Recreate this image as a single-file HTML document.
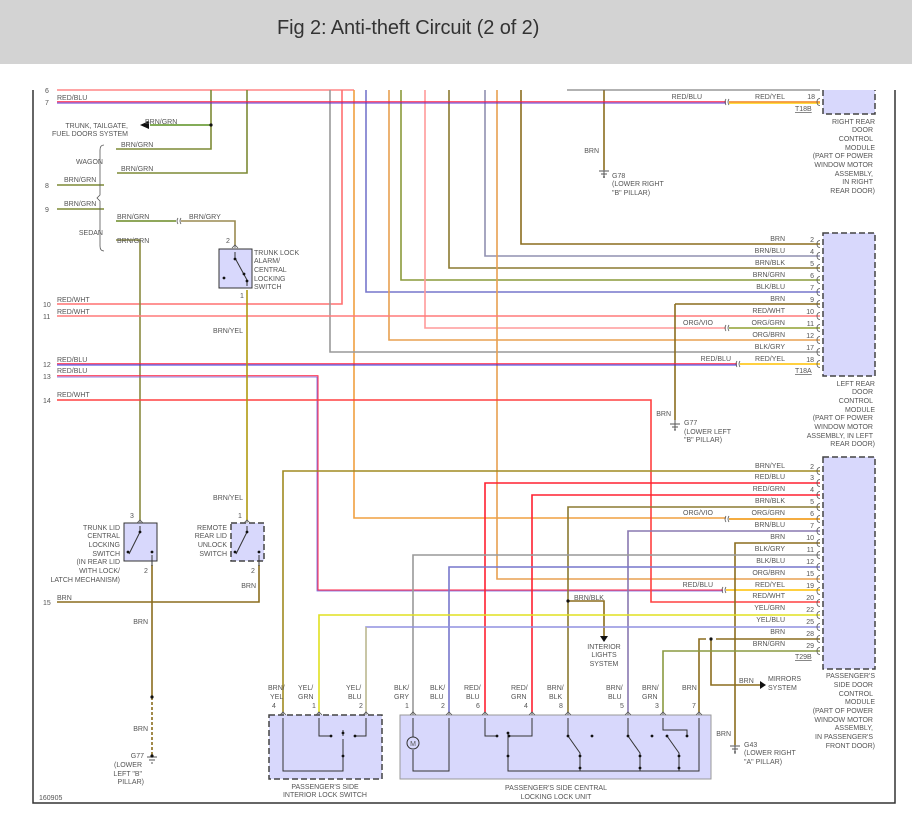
<!DOCTYPE html>
<html><head><meta charset="utf-8">
<style>
html,body{margin:0;padding:0;background:#fff;width:912px;height:816px;overflow:hidden}
#hdr{position:absolute;left:0;top:0;width:912px;height:64px;background:#d3d3d3}
#hdr span{position:absolute;left:277px;top:17px;font:20px "Liberation Sans",sans-serif;color:#333;letter-spacing:-0.1px}
svg{position:absolute;left:0;top:0}
text{font-family:"Liberation Sans",sans-serif;font-size:7px;fill:#555}
.r{text-anchor:end}.m{text-anchor:middle}
</style></head><body>
<div id="hdr"><span>Fig 2: Anti-theft Circuit (2 of 2)</span></div>
<svg width="912" height="816" viewBox="0 0 912 816">
<defs>
<path id="cn" d="M0,-3.5 q-3,0 -3,3.5 q0,3.5 3,3.5" fill="none" stroke="#555" stroke-width="0.8"/>
<path id="up" d="M-3,3 l3,-3 l3,3 M0,0 v3" fill="none" stroke="#555" stroke-width="0.8"/>
</defs>
<path d="M33,90 V803 H895 V90" fill="none" stroke="#333" stroke-width="1.5"/>

<g fill="none" stroke-width="1.6">
<path d="M57,90 H354" stroke="#ff8585"/>
<path d="M342,90 V304 H57" stroke="#ff7070"/>
<path d="M354,90 V518 H726" stroke="#f0a040"/>
<path d="M211,90 V149 H116" stroke="#7d8a35"/>
<path d="M211,125 H150" stroke="#5a9020"/>
<path d="M247,90 V173 H117" stroke="#7d8a35"/>
<path d="M330,90 V352 H820" stroke="#999"/>
<path d="M366,90 V292 H820" stroke="#7777cc"/>
<path d="M389,90 V340 H820" stroke="#e8a050"/>
<path d="M401,90 V280 H820" stroke="#8a9a3a"/>
<path d="M425,90 V328 H726" stroke="#ff9a9a"/>
<path d="M449,90 V268 H820" stroke="#8b7a30"/>
<path d="M485,90 V256 H820" stroke="#9090b0"/>
<path d="M497,90 V579 H820" stroke="#e8a050"/>
<path d="M521,90 V244 H820" stroke="#8b6d1e"/>
<path d="M604,90 V170" stroke="#8b6d1e"/>
<path d="M567,90 H820" stroke="#666" stroke-width="1"/>
<path d="M57,101.8 H726" stroke="#ff2040" stroke-width="1"/>
<path d="M57,103 H726" stroke="#6030d0" stroke-width="1"/>
<path d="M729,102 H820" stroke="#f08020"/><path d="M729,103.2 H820" stroke="#ffd000" stroke-width="1"/>
<path d="M57,185 H104 M57,209 H104" stroke="#7d8a35"/>
<path d="M116,221 H176" stroke="#6a8a25"/>
<path d="M181,221 H235 V245" stroke="#9a8a50"/>
<path d="M116,240 H140 V520" stroke="#8a8a40"/>
<path d="M57,316 H820" stroke="#ff7a7a"/>
<path d="M729,328 H820" stroke="#90a030"/>
<path d="M675,304 H820" stroke="#8b6d1e"/>
<path d="M675,304 V420" stroke="#8b6d1e"/>
<path d="M57,363.8 H737" stroke="#ff2040" stroke-width="1"/>
<path d="M57,365 H737" stroke="#3030e0" stroke-width="1"/>
<path d="M740,364 H820" stroke="#ffc000"/>
<path d="M57,375.8 H318 V590 H723" stroke="#ff2040" stroke-width="1"/>
<path d="M57,377 H317 V591 H723" stroke="#7060e0" stroke-width="0.8"/>
<path d="M726,590 H820" stroke="#ffc000"/>
<path d="M57,400 H651 V602 H820" stroke="#ff4040"/>
<path d="M247,290 V520" stroke="#b09a10"/>
<path d="M57,602 H259 V565" stroke="#8b6d1e"/>
<path d="M152,565 V697" stroke="#8b6d1e"/>
<path d="M152,697 V755" stroke="#8b6d1e" stroke-dasharray="3,2"/>
<path d="M283,712 V471 H820" stroke="#a08a20"/>
<path d="M485,712 V483 H820" stroke="#ff2030"/>
<path d="M532,712 V495 H820" stroke="#ff2030"/>
<path d="M568,712 V507 H820" stroke="#8b7a30"/>
<path d="M568,601 H604 V636" stroke="#8b6d1e"/>
<path d="M729,519 H820" stroke="#f09000"/>
<path d="M628,712 V531 H820" stroke="#8878b0"/>
<path d="M735,745 V543 H820" stroke="#8b6d1e"/>
<path d="M413,712 V555 H820" stroke="#999"/>
<path d="M449,712 V567 H820" stroke="#7777cc"/>
<path d="M319,712 V615 H820" stroke="#e0e020"/>
<path d="M366,712 V627 H820" stroke="#9090e0"/>
<path d="M366,712 V627" stroke="#e8e040" stroke-width="0.8"/>
<path d="M699,712 V639 H706 M716,639 H820" stroke="#8b6d1e"/>
<path d="M711,639 V685 H760" stroke="#8b6d1e"/>
<path d="M663,712 V651 H820" stroke="#8a9a40"/>
</g>
<g fill="#111">
<circle cx="211" cy="125" r="1.6"/><path d="M140,125 l9,-4 v8z"/>
<circle cx="568" cy="601" r="1.6"/><path d="M600,636 h8 l-4,6z"/>
<circle cx="711" cy="639" r="1.6"/><path d="M760,681 v8 l6,-4z"/>
<circle cx="152" cy="697" r="1.6"/>
</g>
<g fill="none" stroke="#555" stroke-width="0.8">
<path d="M178,218 q-2,3 0,6 M181,218 q-2,3 0,6"/>
<path d="M726,99 q-2,3 0,6 M729,99 q-2,3 0,6"/>
<path d="M726,325 q-2,3 0,6 M729,325 q-2,3 0,6"/>
<path d="M737,361 q-2,3 0,6 M740,361 q-2,3 0,6"/>
<path d="M726,516 q-2,3 0,6 M729,516 q-2,3 0,6"/>
<path d="M723,587 q-2,3 0,6 M726,587 q-2,3 0,6"/>
<path d="M104,145 q-4,0 -4,5 v45 l-3,3 l3,3 v45 q0,5 4,5" />
</g>
<g stroke="#555" stroke-width="1" fill="none">
<path d="M599,171 h10 M601,174 h6 M603,177 h2 M604,170 v8"/>
<path d="M670,424 h10 M672,427 h6 M674,430 h2 M675,420 v10"/>
<path d="M730,746 h10 M732,749 h6 M734,752 h2 M735,745 v9"/>
<path d="M147,757 h10 M149,760 h6 M151,763 h2"/>
</g>
<circle cx="152" cy="756" r="1.6" fill="#111"/>

<g fill="#d8d8fc" stroke="#444" stroke-width="1.5" stroke-dasharray="6,3">
<path d="M823,90 V114 H875 V90"/>
<rect x="823" y="233" width="52" height="143"/>
<rect x="823" y="457" width="52" height="212"/>
<rect x="231" y="523" width="33" height="38"/>
<rect x="269" y="715" width="113" height="64"/>
</g>
<rect x="219" y="249" width="33" height="39" fill="#d8d8fc" stroke="#333" stroke-width="1"/>
<rect x="124" y="523" width="33" height="38" fill="#d8d8fc" stroke="#333" stroke-width="1"/>
<rect x="400" y="715" width="311" height="64" fill="#d8d8fc" stroke="#999" stroke-width="1"/>

<g>
<use href="#cn" x="820" y="102"/>
<use href="#cn" x="820" y="244"/><use href="#cn" x="820" y="256"/><use href="#cn" x="820" y="268"/><use href="#cn" x="820" y="280"/><use href="#cn" x="820" y="292"/><use href="#cn" x="820" y="304"/><use href="#cn" x="820" y="316"/><use href="#cn" x="820" y="328"/><use href="#cn" x="820" y="340"/><use href="#cn" x="820" y="352"/><use href="#cn" x="820" y="364"/>
<use href="#cn" x="820" y="471"/><use href="#cn" x="820" y="483"/><use href="#cn" x="820" y="495"/><use href="#cn" x="820" y="507"/><use href="#cn" x="820" y="519"/><use href="#cn" x="820" y="531"/><use href="#cn" x="820" y="543"/><use href="#cn" x="820" y="555"/><use href="#cn" x="820" y="567"/><use href="#cn" x="820" y="579"/><use href="#cn" x="820" y="591"/><use href="#cn" x="820" y="603"/><use href="#cn" x="820" y="615"/><use href="#cn" x="820" y="627"/><use href="#cn" x="820" y="639"/><use href="#cn" x="820" y="651"/>
<use href="#up" x="283" y="712"/><use href="#up" x="319" y="712"/><use href="#up" x="366" y="712"/>
<use href="#up" x="413" y="712"/><use href="#up" x="449" y="712"/><use href="#up" x="485" y="712"/><use href="#up" x="532" y="712"/><use href="#up" x="568" y="712"/><use href="#up" x="628" y="712"/><use href="#up" x="663" y="712"/><use href="#up" x="699" y="712"/>
<use href="#up" x="140" y="520"/><use href="#up" x="247" y="520"/><use href="#up" x="235" y="245"/>
</g>
<g stroke="#333" stroke-width="1" fill="none">
<path d="M235,252 V258 L247,280 V286"/>
<path d="M140,526 V532 L129,554"/>
<path d="M152,555 V566 M247,526 V532 L236,554 M259,555 V566"/>
<path d="M283,718 V771 H343 V759 M319,718 V736 H331 M343,736 V730 M355,736 H366 V718 M343,739 V759"/>
<path d="M413,718 V737 M413,750 V771 H449 V718"/>
<circle cx="413" cy="743" r="6" fill="#d8d8fc"/>
<path d="M485,718 V736 H497 M509,736 H532 V718 M508,732 V771 H699 V718"/>
<path d="M568,718 V736 L580,753 V771 M628,718 V736 L640,753 V771 M663,718 V730 H687 V736 M667,736 L679,753 V771"/>
</g>
<text x="413" y="746" class="m" style="font-size:7px">M</text>
<g fill="#111">
<circle cx="235" cy="259" r="1.4"/><circle cx="244" cy="274" r="1.4"/><circle cx="247" cy="281" r="1.4"/><circle cx="224" cy="278" r="1.4"/>
<circle cx="140" cy="532" r="1.4"/><circle cx="128" cy="552" r="1.4"/><circle cx="152" cy="552" r="1.4"/>
<circle cx="247" cy="532" r="1.4"/><circle cx="235" cy="552" r="1.4"/><circle cx="259" cy="552" r="1.4"/>
<circle cx="331" cy="736" r="1.4"/><circle cx="343" cy="733" r="1.4"/><circle cx="355" cy="736" r="1.4"/><circle cx="343" cy="756" r="1.4"/>
<circle cx="497" cy="736" r="1.4"/><circle cx="508" cy="733" r="1.4"/><circle cx="509" cy="736" r="1.4"/><circle cx="508" cy="756" r="1.4"/>
<circle cx="568" cy="736" r="1.4"/><circle cx="580" cy="756" r="1.4"/><circle cx="592" cy="736" r="1.4"/><circle cx="580" cy="768" r="1.4"/>
<circle cx="628" cy="736" r="1.4"/><circle cx="640" cy="756" r="1.4"/><circle cx="652" cy="736" r="1.4"/><circle cx="640" cy="768" r="1.4"/>
<circle cx="667" cy="736" r="1.4"/><circle cx="679" cy="756" r="1.4"/><circle cx="687" cy="736" r="1.4"/><circle cx="679" cy="768" r="1.4"/>
</g>

<text x="45" y="93">6</text><text x="45" y="105">7</text><text x="57" y="100">RED/BLU</text>
<text x="128" y="128" class="r">TRUNK, TAILGATE,</text><text x="128" y="136" class="r">FUEL DOORS SYSTEM</text>
<text x="145" y="124">BRN/GRN</text>
<text x="121" y="147">BRN/GRN</text><text x="103" y="164" class="r">WAGON</text>
<text x="121" y="171">BRN/GRN</text>
<text x="45" y="188">8</text><text x="64" y="182">BRN/GRN</text>
<text x="45" y="212">9</text><text x="64" y="206">BRN/GRN</text>
<text x="117" y="219">BRN/GRN</text><text x="189" y="219">BRN/GRY</text>
<text x="103" y="235" class="r">SEDAN</text><text x="117" y="243">BRN/GRN</text>
<text x="226" y="243">2</text><text x="240" y="298">1</text>
<text x="254" y="255">TRUNK LOCK</text><text x="254" y="263">ALARM/</text><text x="254" y="272">CENTRAL</text><text x="254" y="281">LOCKING</text><text x="254" y="289">SWITCH</text>
<text x="43" y="307">10</text><text x="57" y="302">RED/WHT</text>
<text x="43" y="319">11</text><text x="57" y="314">RED/WHT</text>
<text x="243" y="333" class="r">BRN/YEL</text>
<text x="43" y="367">12</text><text x="57" y="362">RED/BLU</text>
<text x="43" y="379">13</text><text x="57" y="373">RED/BLU</text>
<text x="43" y="403">14</text><text x="57" y="397">RED/WHT</text>
<text x="243" y="500" class="r">BRN/YEL</text>
<text x="130" y="518">3</text><text x="238" y="518">1</text>
<text x="120" y="530" class="r">TRUNK LID</text><text x="120" y="538" class="r">CENTRAL</text><text x="120" y="547" class="r">LOCKING</text><text x="120" y="556" class="r">SWITCH</text><text x="120" y="564" class="r">(IN REAR LID</text><text x="120" y="573" class="r">WITH LOCK/</text><text x="120" y="582" class="r">LATCH MECHANISM)</text>
<text x="227" y="530" class="r">REMOTE</text><text x="227" y="538" class="r">REAR LID</text><text x="227" y="547" class="r">UNLOCK</text><text x="227" y="556" class="r">SWITCH</text>
<text x="144" y="573">2</text><text x="251" y="573">2</text><text x="256" y="588" class="r">BRN</text>
<text x="43" y="605">15</text><text x="57" y="600">BRN</text>
<text x="148" y="624" class="r">BRN</text><text x="148" y="731" class="r">BRN</text>
<text x="144" y="758" class="r">G77</text><text x="142" y="767" class="r">(LOWER</text><text x="142" y="776" class="r">LEFT "B"</text><text x="144" y="784" class="r">PILLAR)</text>
<text x="39" y="800">160905</text>
<text x="702" y="99" class="r">RED/BLU</text><text x="785" y="99" class="r">RED/YEL</text><text x="815" y="99" class="r">18</text>
<text x="795" y="111" style="text-decoration:underline">T18B</text>
<text x="599" y="153" class="r">BRN</text>
<text x="612" y="178">G78</text><text x="612" y="186">(LOWER RIGHT</text><text x="612" y="195">"B" PILLAR)</text>
<text x="875" y="124" class="r">RIGHT REAR</text><text x="873" y="132" class="r">DOOR</text><text x="873" y="141" class="r">CONTROL</text><text x="875" y="150" class="r">MODULE</text><text x="873" y="158" class="r">(PART OF POWER</text><text x="873" y="167" class="r">WINDOW MOTOR</text><text x="873" y="176" class="r">ASSEMBLY,</text><text x="873" y="184" class="r">IN RIGHT</text><text x="875" y="193" class="r">REAR DOOR)</text>
<text x="785" y="241" class="r">BRN</text><text x="814" y="242" class="r">2</text>
<text x="785" y="253" class="r">BRN/BLU</text><text x="814" y="254" class="r">4</text>
<text x="785" y="265" class="r">BRN/BLK</text><text x="814" y="266" class="r">5</text>
<text x="785" y="277" class="r">BRN/GRN</text><text x="814" y="278" class="r">6</text>
<text x="785" y="289" class="r">BLK/BLU</text><text x="814" y="290" class="r">7</text>
<text x="785" y="301" class="r">BRN</text><text x="814" y="302" class="r">9</text>
<text x="785" y="313" class="r">RED/WHT</text><text x="814" y="314" class="r">10</text>
<text x="713" y="325" class="r">ORG/VIO</text><text x="785" y="325" class="r">ORG/GRN</text><text x="814" y="326" class="r">11</text>
<text x="785" y="337" class="r">ORG/BRN</text><text x="814" y="338" class="r">12</text>
<text x="785" y="349" class="r">BLK/GRY</text><text x="814" y="350" class="r">17</text>
<text x="731" y="361" class="r">RED/BLU</text><text x="785" y="361" class="r">RED/YEL</text><text x="814" y="362" class="r">18</text>
<text x="795" y="373" style="text-decoration:underline">T18A</text>
<text x="671" y="416" class="r">BRN</text>
<text x="684" y="425">G77</text><text x="684" y="434">(LOWER LEFT</text><text x="684" y="442">"B" PILLAR)</text>
<text x="875" y="386" class="r">LEFT REAR</text><text x="873" y="394" class="r">DOOR</text><text x="873" y="403" class="r">CONTROL</text><text x="875" y="412" class="r">MODULE</text><text x="873" y="420" class="r">(PART OF POWER</text><text x="873" y="429" class="r">WINDOW MOTOR</text><text x="873" y="438" class="r">ASSEMBLY, IN LEFT</text><text x="875" y="446" class="r">REAR DOOR)</text>
<text x="785" y="468" class="r">BRN/YEL</text><text x="814" y="469" class="r">2</text>
<text x="785" y="479" class="r">RED/BLU</text><text x="814" y="480" class="r">3</text>
<text x="785" y="491" class="r">RED/GRN</text><text x="814" y="492" class="r">4</text>
<text x="785" y="503" class="r">BRN/BLK</text><text x="814" y="504" class="r">5</text>
<text x="713" y="515" class="r">ORG/VIO</text><text x="785" y="515" class="r">ORG/GRN</text><text x="814" y="516" class="r">6</text>
<text x="785" y="527" class="r">BRN/BLU</text><text x="814" y="528" class="r">7</text>
<text x="785" y="539" class="r">BRN</text><text x="814" y="540" class="r">10</text>
<text x="785" y="551" class="r">BLK/GRY</text><text x="814" y="552" class="r">11</text>
<text x="785" y="563" class="r">BLK/BLU</text><text x="814" y="564" class="r">12</text>
<text x="785" y="575" class="r">ORG/BRN</text><text x="814" y="576" class="r">15</text>
<text x="713" y="587" class="r">RED/BLU</text><text x="785" y="587" class="r">RED/YEL</text><text x="814" y="588" class="r">19</text>
<text x="785" y="598" class="r">RED/WHT</text><text x="814" y="600" class="r">20</text>
<text x="785" y="610" class="r">YEL/GRN</text><text x="814" y="612" class="r">22</text>
<text x="785" y="622" class="r">YEL/BLU</text><text x="814" y="624" class="r">25</text>
<text x="785" y="634" class="r">BRN</text><text x="814" y="636" class="r">28</text>
<text x="785" y="646" class="r">BRN/GRN</text><text x="814" y="648" class="r">29</text>
<text x="795" y="659" style="text-decoration:underline">T29B</text>
<text x="574" y="600">BRN/BLK</text>
<text x="604" y="649" class="m">INTERIOR</text><text x="604" y="657" class="m">LIGHTS</text><text x="604" y="666" class="m">SYSTEM</text>
<text x="739" y="683">BRN</text><text x="768" y="681">MIRRORS</text><text x="768" y="690">SYSTEM</text>
<text x="731" y="736" class="r">BRN</text>
<text x="744" y="747">G43</text><text x="744" y="755">(LOWER RIGHT</text><text x="744" y="764">"A" PILLAR)</text>
<text x="875" y="678" class="r">PASSENGER'S</text><text x="873" y="687" class="r">SIDE DOOR</text><text x="873" y="696" class="r">CONTROL</text><text x="875" y="704" class="r">MODULE</text><text x="873" y="713" class="r">(PART OF POWER</text><text x="873" y="722" class="r">WINDOW MOTOR</text><text x="873" y="730" class="r">ASSEMBLY,</text><text x="873" y="739" class="r">IN PASSENGER'S</text><text x="875" y="748" class="r">FRONT DOOR)</text>
<text x="268" y="690">BRN/</text><text x="270" y="699">YEL</text><text x="272" y="708">4</text>
<text x="298" y="690">YEL/</text><text x="298" y="699">GRN</text><text x="312" y="708">1</text>
<text x="346" y="690">YEL/</text><text x="348" y="699">BLU</text><text x="359" y="708">2</text>
<text x="394" y="690">BLK/</text><text x="394" y="699">GRY</text><text x="405" y="708">1</text>
<text x="430" y="690">BLK/</text><text x="430" y="699">BLU</text><text x="441" y="708">2</text>
<text x="464" y="690">RED/</text><text x="466" y="699">BLU</text><text x="476" y="708">6</text>
<text x="511" y="690">RED/</text><text x="511" y="699">GRN</text><text x="524" y="708">4</text>
<text x="547" y="690">BRN/</text><text x="549" y="699">BLK</text><text x="559" y="708">8</text>
<text x="606" y="690">BRN/</text><text x="608" y="699">BLU</text><text x="620" y="708">5</text>
<text x="642" y="690">BRN/</text><text x="642" y="699">GRN</text><text x="655" y="708">3</text>
<text x="682" y="690">BRN</text><text x="692" y="708">7</text>
<text x="325" y="789" class="m">PASSENGER'S SIDE</text><text x="325" y="797" class="m">INTERIOR LOCK SWITCH</text>
<text x="556" y="790" class="m">PASSENGER'S SIDE CENTRAL</text><text x="556" y="799" class="m">LOCKING LOCK UNIT</text>
</svg>
</body></html>
